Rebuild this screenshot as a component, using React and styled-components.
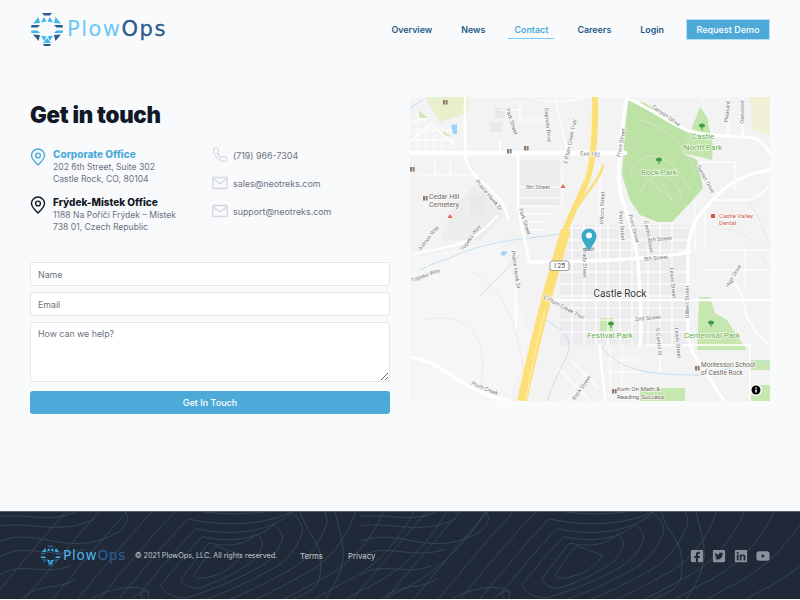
import React from 'react';
import styled, { createGlobalStyle } from 'styled-components';
import { FaFacebookSquare, FaTwitterSquare, FaLinkedin, FaYoutube } from 'react-icons/fa';

const GlobalStyle = createGlobalStyle`
  html, body { margin: 0; padding: 0; background: #f9fafc; }
  * { box-sizing: border-box; }
  body { font-family: Inter, "Open Sans", sans-serif; }
`;

const Page = styled.div`
  width: 800px;
  height: 600px;
  display: flex;
  flex-direction: column;
  overflow: hidden;
`;

const Header = styled.header`
  height: 58px;
  padding: 0 30px;
  display: flex;
  align-items: center;
  justify-content: space-between;
`;

const LogoLink = styled.a`
  display: flex;
  align-items: center;
  gap: 3px;
`;

const LogoWord = styled.span`
  font-family: "DejaVu Sans", sans-serif;
  font-size: ${p => p.$size}px;
  font-weight: 400;
  letter-spacing: ${p => p.$spacing}px;
  line-height: 1;
  color: ${p => p.$light};
  b { font-weight: 400; color: ${p => p.$dark}; -webkit-text-stroke: 0.3px ${p => p.$dark}; }
`;

const Nav = styled.nav`
  display: flex;
  align-items: center;
`;

const NavItem = styled.a`
  height: 20px;
  margin-right: ${p => (p.$active ? 23 : 29)}px;
  margin-left: ${p => (p.$active ? -6 : 0)}px;
  padding: 1px ${p => (p.$active ? 6 : 0)}px 0;
  display: flex;
  align-items: center;
  font-size: 8.9px;
  font-weight: 600;
  color: ${p => (p.$active ? '#4daad8' : '#1d5a88')};
  border-bottom: 1px solid ${p => (p.$active ? '#6fd0fb' : 'transparent')};
`;

const DemoButton = styled.a`
  width: 84px;
  height: 21px;
  margin-left: -7px;
  display: flex;
  align-items: center;
  justify-content: center;
  background: #4daad8;
  border: 1px solid #b5dff3;
  color: #fff;
  font-size: 9px;
  font-weight: 500;
`;

const Main = styled.main`
  flex: 1;
  padding: 39px 30px 0;
  display: grid;
  grid-template-columns: 360px 360px;
  column-gap: 20px;
  align-items: start;
`;

const Title = styled.h1`
  margin: 0;
  height: 36px;
  font-size: 22.3px;
  line-height: 36px;
  font-weight: 900;
  letter-spacing: -0.3px;
  color: #111827;
`;

const ContactGrid = styled.div`
  margin-top: 14px;
  height: 110px;
  display: flex;
`;

const Offices = styled.div`
  width: 182px;
  display: flex;
  flex-direction: column;
  gap: 9px;
`;

const Office = styled.div`
  display: flex;
  gap: 7px;
`;

const PinBox = styled.div`
  width: 16px;
  padding-top: 1px;
`;

const OfficeName = styled.div`
  font-size: 10px;
  font-weight: 800;
  line-height: 14px;
  color: ${p => p.$color};
`;

const Address = styled.div`
  font-size: 8.6px;
  line-height: 12.4px;
  color: #6b7280;
`;

const Reach = styled.div`
  display: flex;
  flex-direction: column;
  gap: 12px;
`;

const ReachRow = styled.div`
  height: 16px;
  display: flex;
  align-items: center;
  gap: 5px;
  font-size: 8.9px;
  color: #6b7280;
`;

const Form = styled.form`
  margin-top: 5px;
  display: flex;
  flex-direction: column;
  gap: 6px;
`;

const fieldStyles = `
  width: 100%;
  display: block;
  background: #fff;
  border: 1px solid #e3e5eb;
  border-bottom-width: 1.5px;
  border-radius: 3px;
  padding: 0 7px;
  font-family: Inter, sans-serif;
  font-size: 8.8px;
  outline: none;
  &::placeholder { color: #6b7280; opacity: 1; }
`;

const Field = styled.input`
  ${fieldStyles}
  height: 24px;
`;

const Area = styled.textarea`
  ${fieldStyles}
  height: 60px;
  padding-top: 5px;
`;

const Submit = styled.button`
  margin-top: 3px;
  height: 23px;
  border: none;
  border-radius: 3px;
  background: #4daad8;
  color: #fff;
  font-family: Inter, sans-serif;
  font-size: 9px;
  font-weight: 500;
`;

const MapFrame = styled.div`
  height: 304px;
  svg { display: block; }
`;

const Footer = styled.footer`
  position: relative;
  height: 88px;
  margin-bottom: 1px;
  padding: 0 30px 0 40px;
  display: flex;
  align-items: center;
  background: #1f2937;
  border-top: 1px solid #55606c;
  overflow: hidden;
`;

const Contours = styled.svg`
  position: absolute;
  left: 0;
  top: 0;
`;

const FooterBrand = styled.div`
  position: relative;
  width: 95px;
  display: flex;
  align-items: center;
  gap: 2px;
`;

const FooterText = styled.span`
  position: relative;
  width: ${p => p.$width}px;
  font-size: ${p => p.$size}px;
  color: #c7ccd3;
  white-space: nowrap;
`;

const Social = styled.div`
  position: relative;
  margin-left: auto;
  display: flex;
  align-items: center;
  gap: 8px;
  color: #8a919b;
  font-size: 14px;
  svg { display: block; }
`;

const LogoMark = ({ size }) => {
  const dark = '#2c5a8e';
  const light = '#41b6ea';
  return (
    <svg width={size} height={size} viewBox="0 0 34 34">
      <polygon points="12,1 22,1 20,3.5 14,3.5" fill={dark} />
      <polygon points="14,5 16.5,9.5 11,10.5" fill={light} />
      <polygon points="20,5 17.5,9.5 23,10.5" fill={light} />
      <polygon points="8.5,5 10,11 3,11.5" fill={light} />
      <polygon points="25.5,5 24,11 31,11.5" fill={light} />
      <polygon points="1.5,13 10,13 7.5,15.5 1,15.5" fill={dark} />
      <polygon points="32.5,13 24,13 26.5,15.5 33,15.5" fill={dark} />
      <polygon points="1,18.5 7.5,18.5 10,21 1.5,21" fill={light} />
      <polygon points="33,18.5 26.5,18.5 24,21 32.5,21" fill={light} />
      <polygon points="3,22.5 10,23 8.5,29" fill={dark} />
      <polygon points="31,22.5 24,23 25.5,29" fill={dark} />
      <polygon points="11,23.5 16.5,24.5 14,29" fill={light} />
      <polygon points="23,23.5 17.5,24.5 20,29" fill={light} />
      <polygon points="17,26 21,31 13,31" fill={light} />
      <polygon points="13,32 21,32 20,34 14,34" fill={dark} />
    </svg>
  );
};

const Pin = ({ color }) => (
  <svg width="16" height="18" viewBox="0 0 16 18" fill="none" stroke={color} strokeWidth="1.4">
    <path d="M8 17 C5 14 1.5 11 1.5 7.5 A6.5 6.5 0 0 1 14.5 7.5 C14.5 11 11 14 8 17 Z" />
    <circle cx="8" cy="7.5" r="2.4" />
  </svg>
);

const Phone = () => (
  <svg width="16" height="16" viewBox="0 0 24 24" fill="none" stroke="#d3d6dc" strokeWidth="1.6" strokeLinejoin="round">
    <path d="M22 17 v3 a2 2 0 0 1-2.2 2 A19.8 19.8 0 0 1 2 4.2 A2 2 0 0 1 4 2 h3 a2 2 0 0 1 2 1.7 c.1 1 .4 1.9 .7 2.8 a2 2 0 0 1-.5 2.1 L7.9 9.9 a16 16 0 0 0 6.2 6.2 l1.3-1.3 a2 2 0 0 1 2.1-.5 c.9 .3 1.8 .6 2.8 .7 A2 2 0 0 1 22 17 Z" />
  </svg>
);

const Mail = () => (
  <svg width="16" height="14" viewBox="0 0 16 14" fill="none" stroke="#d3d6dc" strokeWidth="1.3">
    <rect x="0.8" y="1.5" width="14.4" height="11" rx="1" />
    <path d="M1 2.5 L8 8 L15 2.5" />
  </svg>
);

const whiteRoads = [
  ['M410 153 H625', 4.5],
  ['M627 97 C622 130 615 170 621 195 C626 212 635 235 638 262 C640 290 642 330 640 345', 3.5],
  ['M627 98 C650 108 665 120 680 127 C695 136 735 136 753 138 C762 140 766 148 770 153', 3],
  ['M770 170 C748 173 728 182 713 200 C700 214 690 222 688 250 L688 340 L693 353 L724 401', 3],
  ['M465 97 V153 C466 170 476 176 482 182 C492 192 505 200 508 220', 2.5],
  ['M518 153 V205 C520 225 526 240 529 262', 2.5],
  ['M410 142 L431 124 L455 145', 1.5],
  ['M410 122 L429 118', 1.5],
  ['M500 140 V153', 1.5],
  ['M530 262 C570 262 650 260 690 252', 3.5],
  ['M410 357 C440 362 455 380 472 388 C485 395 495 399 510 401', 3.5],
  ['M411 255 C425 250 445 250 470 240 C482 232 490 224 497 216', 2],
  ['M423 260 C430 270 438 285 445 290', 1],
  ['M516 286 V330', 1.5],
  ['M557 300 H770', 2.5],
  ['M600 345 C600 370 605 385 605 401', 2.5],
  ['M645 345 H750 V401', 1.5],
  ['M732 280 C740 290 745 300 745 310 C748 320 755 335 770 345', 1.5],
  ['M660 345 V372', 1.5],
  ['M712 200 H750 C760 196 765 190 770 186', 1.5],
  ['M700 162 H735 V190', 1.2],
  ['M728 97 V135', 1.5],
  ['M743 97 V137', 1.5],
  ['M560 370 L590 400', 1.2],
  ['M570 360 L598 388', 1.2],
  ['M592 378 L566 401', 1.2],
  ['M575 385 L585 375 M568 393 L578 383', 1],
  ['M610 345 V385 M622 345 V385 M610 360 H640 M610 372 H640', 1],
  ['M412 130 H452 M418 112 V150 M426 122 V150 M434 122 V150 M442 130 V150 M412 140 H455', 1],
  ['M540 100 C560 104 575 100 585 97', 1.2],
  ['M555 98 C560 120 565 145 568 153', 1.2],
  ['M700 97 L705 104', 1],
];

const grid = [
  ...[228, 240, 250, 272, 284, 296, 308, 320, 332].map(y => `M560 ${y} H690`),
  ...[572, 584, 596, 608, 620, 632, 648, 660, 672].map(x => `M${x} 222 V345`),
  'M518 198 H560 M520 206 H556 M520 214 H552 M520 222 H548 M520 230 H544',
  'M520 187 H562 M562 170 V205 M600 165 V260',
  'M695 200 V252 M705 210 V250 M720 250 H770 M745 250 V290',
  'M700 270 H770 M725 300 H770',
  'M418 175 H480 M435 160 V175 M450 160 V175',
  'M520 100 V120 H555 M500 110 H520',
];

const labels = [
  ['Park Street', 510, 122, 72], ['Capriola Drive', 546, 125, 85], ['E Plum Creek Trail', 572, 142, -78],
  ['Exit 182', 590, 156, 5], ['8th Street', 538, 189, 0], ['Prairie Hawk Dr.', 488, 197, 50],
  ['Park Street', 523, 222, 72], ['Ashton Way', 430, 239, -52], ['Topeka Way', 472, 239, -55],
  ['Canyon Drive', 665, 117, 35], ['Front Street', 623, 143, -80], ['Sunset Drive', 704, 180, 62],
  ['Wilcox Street', 604, 208, -88], ['Perry Street', 620, 226, 85], ['Front Street', 632, 229, 75],
  ['Cantril Street', 647, 237, 80], ['6th Street', 660, 241, -5], ['Pleasant', 729, 112, -85],
  ['Oakwood', 744, 112, -90], ['Brady Street', 583, 263, 90], ['Topeka Way', 426, 277, -20],
  ['Prairie Hawk Dr', 514, 270, 82], ['E Plum Creek Trail', 563, 309, 28], ['Plum Creek', 484, 390, 22],
  ['Rock Street', 583, 389, -55], ['5th Street', 656, 260, -5], ['Lewis Street', 671, 283, 85],
  ['Gilbert Street', 689, 302, -90], ['2nd Street', 648, 320, -5], ['S Cantril St', 657, 342, 85],
  ['Lewis Street', 676, 343, 85], ['High Drive', 735, 277, -60],
];

const greens = [
  ['Castle', 703, 139, 8], ['North Park', 703, 150, 8], ['Rock Park', 659, 175, 8],
  ['Festival Park', 610, 338, 8], ['Centennial Park', 712, 338, 8],
];

const pois = [
  ['Cedar Hill', 429, 199, 7], ['Cemetery', 429, 207, 7], ['Montessori School', 701, 367, 6.5],
  ['of Castle Rock', 701, 375, 6.5], ['Kum On Math &', 617, 391, 6.2], ['Reading Success', 617, 399, 6.2],
];

const trees = [[702, 126], [659, 160], [611, 324], [711, 323]];
const shops = [[443, 100], [507, 149], [524, 146], [423, 196], [410, 167], [695, 366], [612, 389]];
const reds = [[563, 184], [450, 214]];

const MapLabel = ({ text, x, y, rot = 0, size = 5.6, fill = '#757575', anchor = 'middle' }) => (
  <text
    x={x}
    y={y}
    fontSize={size}
    fill={fill}
    textAnchor={anchor}
    fontFamily="Roboto, sans-serif"
    stroke="#fff"
    strokeWidth="1.2"
    paintOrder="stroke"
    transform={rot ? `rotate(${rot} ${x} ${y})` : undefined}
  >
    {text}
  </text>
);

const CastleMap = () => (
  <svg width="360" height="304" viewBox="410 97 360 304">
    <rect x="410" y="97" width="360" height="304" fill="#f3f3f3" />

    {/* land tints */}
    <path d="M425 97 H468 V113 L440 122 Z" fill="#e9efcb" />
    <path d="M750 97 H770 V135 L752 130 Z" fill="#f1f1d8" />
    <path d="M438 128 L452 137 L444 135 Z M418 110 L428 118 L420 118 Z" fill="#cfe8bb" />
    <path d="M520 160 H560 V205 H520 Z M560 225 H690 V345 H560 Z" fill="#ececee" />
    <path d="M475 185 L505 215 L480 240 L440 240 L455 205 Z" fill="#ededed" />
    <path d="M410 258 L500 240 L530 340 L510 401 H410 Z" fill="#f6f6f6" />
    <path d="M495 108 H505 V118 H495 Z M490 122 H502 V132 H490 Z M470 195 H485 V215 H470 Z" fill="#e9e9e9" />

    {/* parks */}
    <path d="M628 100 L645 103 L680 128 L690 134 L682 153 L697 160 L703 188 L690 203 L672 222 L658 222 L640 215 L630 200 L622 175 L625 130 Z" fill="#bde2a5" />
    <path d="M700 107 L707 117 L713 147 L712 160 L700 157 L682 153 L690 133 Z" fill="#c3e6ac" />
    <path d="M600 318 H613 V332 H600 Z M699 297 L710 297 L715 313 L727 320 L735 333 L747 350 L697 350 Z" fill="#c6e8b0" />
    <path d="M750 360 H770 V370 H750 Z M750 385 H770 V401 H750 Z M640 388 H685 V401 H640 Z" fill="#c6e8b0" />
    <path d="M640 120 C665 125 690 150 695 175 M630 175 C640 145 670 150 690 190 M640 195 C650 165 675 170 682 200 M650 180 L672 200 L660 180" fill="none" stroke="#e7f3dc" strokeWidth="0.7" strokeDasharray="2 1" />
    <path d="M745 200 C760 210 765 240 770 245 M720 230 C745 225 760 250 770 270" fill="none" stroke="#e3e3da" strokeWidth="0.7" />
    <path d="M425 320 C470 310 490 340 480 390 M470 270 C510 290 520 340 525 380" fill="none" stroke="#e4e4dc" strokeWidth="0.7" />

    {/* water */}
    <path d="M410 108 L423 100 M480 296 L520 255 M566 232 C540 240 495 236 450 258 C430 264 425 268 420 270 M545 320 C565 330 575 340 565 360 C555 380 548 395 548 401 M600 345 C620 372 650 375 700 375 C720 372 750 360 770 362" fill="none" stroke="#b5dcf2" strokeWidth="0.8" />
    <path d="M500 254 L504 256 L508 252 L503 251 Z M451 125 L457 124 V134 L453 134 Z" fill="#9fd3f5" />

    {/* streets */}
    <g fill="none" stroke="#fff" strokeWidth="1.2">
      {grid.map(d => <path key={d} d={d} />)}
    </g>
    <g fill="none" stroke="#fff" strokeLinecap="round">
      {whiteRoads.map(([d, w]) => <path key={d} d={d} strokeWidth={w} />)}
    </g>

    {/* I-25 */}
    <g fill="none" strokeLinecap="butt">
      <path d="M595 97 C596 125 594 160 587 180 C580 198 570 215 564 235" stroke="#fddf78" strokeWidth="6" />
      <path d="M603 165 C600 180 584 195 574 212" stroke="#fddf78" strokeWidth="2.5" />
      <path d="M566 230 C552 275 540 320 522 401" stroke="#fddf78" strokeWidth="10" />
      <path d="M545 310 C535 350 530 375 526 401" stroke="#fff0bd" strokeWidth="1" />
      <path d="M591 110 C591 140 590 165 584 182" stroke="#fff0bd" strokeWidth="1" />
    </g>

    {labels.map(([text, x, y, rot]) => <MapLabel key={text + x} text={text} x={x} y={y} rot={rot} />)}
    {greens.map(([text, x, y, size]) => <MapLabel key={text} text={text} x={x} y={y} size={size} fill="#5fa83f" />)}
    {pois.map(([text, x, y, size]) => <MapLabel key={text} text={text} x={x} y={y} size={size} fill="#6d6156" anchor="start" />)}
    <MapLabel text="Castle Rock" x={620} y={297} size={10} fill="#333" />
    <MapLabel text="Castle Valley" x={719} y={218} size={6} fill="#d0544a" anchor="start" />
    <MapLabel text="Dental" x={719} y={225} size={6} fill="#d0544a" anchor="start" />

    {trees.map(([x, y]) => (
      <path key={x} d={`M${x - 3} ${y} a3 2.5 0 0 1 6 0 a3 1.5 0 0 1-2.5 1.5 v2.5 h-1 v-2.5 a3 1.5 0 0 1-2.5-1.5 Z`} fill="#3f9b3f" />
    ))}
    {shops.map(([x, y]) => (
      <g key={x} fill="#8d7b70">
        <rect x={x} y={y} width="2" height="4.5" />
        <rect x={x + 2.6} y={y} width="2" height="4.5" />
      </g>
    ))}
    {reds.map(([x, y]) => <path key={x} d={`M${x} ${y} l2.5 4 h-5 Z`} fill="#e0645a" />)}
    <rect x="711" y="214" width="4" height="4" fill="#d9534a" />

    {/* shield */}
    <rect x="550" y="261" width="19" height="9.5" rx="2" fill="#fff" stroke="#777" strokeWidth="0.7" />
    <text x="559.5" y="268.4" fontSize="6.5" fontFamily="Roboto, sans-serif" textAnchor="middle" fill="#444">I 25</text>

    {/* marker */}
    <ellipse cx="589" cy="249" rx="6" ry="2" fill="#8a8a8a" opacity="0.5" />
    <path d="M589 251 C585 244 581.5 241 581.5 236 A7.5 7.5 0 0 1 596.5 236 C596.5 241 593 244 589 251 Z" fill="#3aa9c6" />
    <circle cx="589" cy="235.5" r="3" fill="#f4fbfd" />

    {/* info button */}
    <circle cx="756" cy="390" r="6" fill="#fff" />
    <circle cx="756" cy="390" r="4.5" fill="#000" />
    <rect x="755.3" y="389.5" width="1.5" height="3" fill="#fff" />
    <rect x="755.3" y="387.3" width="1.5" height="1.4" fill="#fff" />
  </svg>
);

const loops = [
  'M216 545 C225 548 236 552 242 555 C232 566 222 574 212 575 C204 578 196 578 194 575 C200 564 208 552 216 545 Z',
  'M257 533 C262 538 263 542 262 545 C258 556 252 562 246 565 C232 574 214 582 199 587 C190 588 184 584 181 578 C190 566 200 552 209 542 C225 546 245 545 257 533 Z',
];
const rings = [1.5, 2, 2.6, 3.3, 4.1, 5, 6, 7.2];
const sideLines = [
  'M0 525 C30 520 60 535 95 518 M0 540 C40 525 70 560 120 530 C130 520 128 515 125 511',
  'M0 556 C25 540 50 560 85 548 M0 574 C20 560 45 575 70 565 M20 599 C40 580 60 590 75 578',
  'M130 599 C148 585 150 590 148 599 M90 599 C100 590 140 580 150 592',
  'M300 511 C310 540 325 540 320 575 C318 590 300 595 290 599 M335 511 C345 550 350 560 325 599',
  'M0 515 H25 C60 520 70 512 75 511',
];

const Topo = () => (
  <Contours width="800" height="88" viewBox="0 511 800 88">
    <g fill="none" stroke="#3a4b5e" strokeWidth="0.8">
      {[0, 361].map(dx => (
        <g key={dx} transform={`translate(${dx} 0)`}>
          {loops.map(d => <path key={d} d={d} />)}
          {rings.map(s => (
            <path
              key={s}
              d={loops[1]}
              vectorEffect="non-scaling-stroke"
              transform={`translate(222 560) scale(${s} ${s * 0.9}) translate(-222 -560)`}
            />
          ))}
          {sideLines.map(d => <path key={d} d={d} />)}
        </g>
      ))}
    </g>
  </Contours>
);

export default function App() {
  return (
    <Page>
      <GlobalStyle />
      <Header>
        <LogoLink>
          <LogoMark size={34} />
          <LogoWord $size={21} $spacing={1.5} $light="#6bc8f5" $dark="#2c5a8e">Plow<b>Ops</b></LogoWord>
        </LogoLink>
        <Nav>
          <NavItem>Overview</NavItem>
          <NavItem>News</NavItem>
          <NavItem $active>Contact</NavItem>
          <NavItem>Careers</NavItem>
          <NavItem>Login</NavItem>
          <DemoButton>Request Demo</DemoButton>
        </Nav>
      </Header>

      <Main>
        <div>
          <Title>Get in touch</Title>
          <ContactGrid>
            <Offices>
              <Office>
                <PinBox><Pin color="#4daad8" /></PinBox>
                <div>
                  <OfficeName $color="#4daad8">Corporate Office</OfficeName>
                  <Address>202 6th Street, Suite 302<br />Castle Rock, CO, 80104</Address>
                </div>
              </Office>
              <Office>
                <PinBox><Pin color="#111827" /></PinBox>
                <div>
                  <OfficeName $color="#111827">Frýdek-Místek Office</OfficeName>
                  <Address>1188 Na Poříčí Frýdek – Místek<br />738 01, Czech Republic</Address>
                </div>
              </Office>
            </Offices>
            <Reach>
              <ReachRow><Phone />(719) 966-7304</ReachRow>
              <ReachRow><Mail />sales@neotreks.com</ReachRow>
              <ReachRow><Mail />support@neotreks.com</ReachRow>
            </Reach>
          </ContactGrid>
          <Form>
            <Field placeholder="Name" />
            <Field placeholder="Email" />
            <Area placeholder="How can we help?" />
            <Submit type="button">Get In Touch</Submit>
          </Form>
        </div>
        <MapFrame>
          <CastleMap />
        </MapFrame>
      </Main>

      <Footer>
        <Topo />
        <FooterBrand>
          <LogoMark size={21} />
          <LogoWord $size={13.5} $spacing={0.8} $light="#4fb4e8" $dark="#2c5a8e">Plow<b>Ops</b></LogoWord>
        </FooterBrand>
        <FooterText $width={165} $size={7.2}>© 2021 PlowOps, LLC. All rights reserved.</FooterText>
        <FooterText $width={48} $size={7.8}>Terms</FooterText>
        <FooterText $width={40} $size={7.8}>Privacy</FooterText>
        <Social>
          <FaFacebookSquare />
          <FaTwitterSquare />
          <FaLinkedin />
          <FaYoutube />
        </Social>
      </Footer>
    </Page>
  );
}
